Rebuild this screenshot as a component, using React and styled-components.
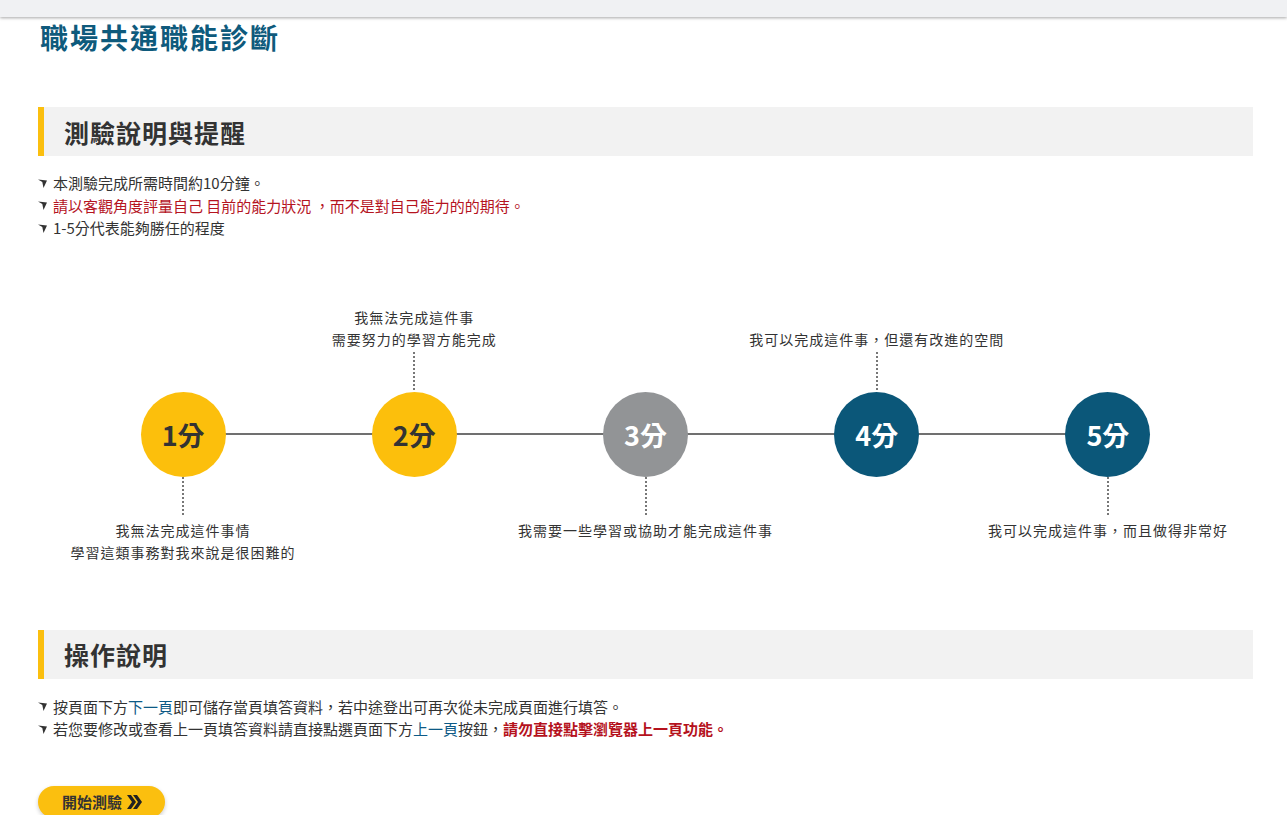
import styled, { createGlobalStyle } from 'styled-components'

const GlobalStyle = createGlobalStyle`
  body {
    margin: 0;
    background: #fff;
    font-family: "Noto Sans CJK TC", "Noto Sans", "Liberation Sans", sans-serif;
    color: #333;
  }
`

const TopBar = styled.div`
  height: 17px;
  background: #f0f1f3;
  box-shadow: 0 1px 3px rgba(0, 0, 0, 0.35);
`

const Page = styled.div`
  padding: 0 34px 0 38px;
`

const Title = styled.h1`
  margin: 1px 0 0 2px;
  font-size: 28px;
  line-height: 39px;
  font-weight: 700;
  letter-spacing: 2px;
  color: #0e5a7c;
`

const SectionHeader = styled.h2`
  margin: ${props => props.top}px 0 0;
  height: 49px;
  display: flex;
  align-items: center;
  padding-left: 20px;
  border-left: 6px solid #fbbf0f;
  background: #f2f2f2;
  font-size: 25px;
  font-weight: 700;
  letter-spacing: 1px;
  color: #333;
`

const List = styled.ul`
  list-style: none;
  margin: ${props => props.top || 16}px 0 0;
  padding: 0;
`

const Item = styled.li`
  display: flex;
  align-items: center;
  gap: 6px;
  font-size: 15px;
  line-height: 22.5px;
  color: ${props => props.red ? '#b5141f' : '#333'};
`

const Link = styled.span`
  color: #0d5a86;
`

const Warn = styled.b`
  color: #b5121d;
`

const Bullet = () => (
  <svg width="9" height="9" viewBox="0 0 9 9">
    <polygon points="0,0.5 9,1.5 5.5,9 4.3,3" fill="#333" />
  </svg>
)

const Timeline = styled.div`
  position: relative;
  width: 1156px;
  margin: 66px auto 0;
  display: grid;
  grid-template-columns: repeat(5, minmax(0, 1fr));

  &::before {
    content: "";
    position: absolute;
    left: 115px;
    right: 115px;
    top: 127px;
    height: 2px;
    background: #707070;
  }
`

const Step = styled.div`
  position: relative;
  display: flex;
  flex-direction: column;
  align-items: center;
`

const Slot = styled.div`
  height: ${props => props.h}px;
  display: flex;
  flex-direction: column;
  align-items: center;
  justify-content: ${props => props.up ? 'flex-end' : 'flex-start'};
`

const Dots = styled.div`
  width: 2px;
  height: 40px;
  margin: ${props => props.up ? '2px 0 0' : '0 0 2px'};
  background: repeating-linear-gradient(to bottom, #777 0 2px, transparent 2px 4px);
`

const Label = styled.div`
  font-size: 14px;
  line-height: 22px;
  letter-spacing: 1px;
  text-align: center;
  white-space: nowrap;
  color: #333;
`

const Circle = styled.div`
  position: relative;
  z-index: 1;
  width: 85px;
  height: 85px;
  border-radius: 50%;
  display: flex;
  align-items: center;
  justify-content: center;
  background: ${props => props.bg};
  color: ${props => props.fg};
  font-size: 27px;
  font-weight: 700;
`

const Button = styled.button`
  margin-top: 45px;
  height: 32px;
  padding: 0 22px 0 24px;
  display: flex;
  align-items: center;
  gap: 5px;
  border: none;
  border-radius: 16px;
  background: #fbbf0f;
  box-shadow: 0 2px 4px rgba(0, 0, 0, 0.2);
  font-family: inherit;
  font-size: 15px;
  font-weight: 700;
  color: #333;
  cursor: pointer;
`

const Chevrons = () => (
  <svg width="16" height="14" viewBox="0 0 16 14">
    <polygon points="0,0 4,0 9,7 4,14 0,14 5,7" fill="#222" />
    <polygon points="6,0 10,0 15,7 10,14 6,14 11,7" fill="#222" />
  </svg>
)

const steps = [
  { score: '1分', bg: '#fcbf0c', fg: '#333', down: ['我無法完成這件事情', '學習這類事務對我來說是很困難的'] },
  { score: '2分', bg: '#fcbf0c', fg: '#333', up: ['我無法完成這件事', '需要努力的學習方能完成'] },
  { score: '3分', bg: '#929496', fg: '#fff', down: ['我需要一些學習或協助才能完成這件事'] },
  { score: '4分', bg: '#0b5779', fg: '#fff', up: ['我可以完成這件事，但還有改進的空間'] },
  { score: '5分', bg: '#0b5779', fg: '#fff', down: ['我可以完成這件事，而且做得非常好'] },
]

const App = () => {
  return (
    <>
      <GlobalStyle />
      <TopBar />
      <Page>
        <Title>職場共通職能診斷</Title>

        <SectionHeader top={50}>測驗說明與提醒</SectionHeader>
        <List>
          <Item><Bullet /><span>本測驗完成所需時間約10分鐘。</span></Item>
          <Item red><Bullet /><span>請以客觀角度評量自己 目前的能力狀況 ，而不是對自己能力的的期待。</span></Item>
          <Item><Bullet /><span>1-5分代表能夠勝任的程度</span></Item>
        </List>

        <Timeline>
          {steps.map(step => (
            <Step key={step.score}>
              <Slot h={86} up>
                {step.up && (
                  <>
                    {step.up.map(line => <Label key={line}>{line}</Label>)}
                    <Dots up />
                  </>
                )}
              </Slot>
              <Circle bg={step.bg} fg={step.fg}>{step.score}</Circle>
              <Slot h={86}>
                {step.down && (
                  <>
                    <Dots />
                    {step.down.map(line => <Label key={line}>{line}</Label>)}
                  </>
                )}
              </Slot>
            </Step>
          ))}
        </Timeline>

        <SectionHeader top={67}>操作說明</SectionHeader>
        <List top={17}>
          <Item><Bullet /><span>按頁面下方<Link>下一頁</Link>即可儲存當頁填答資料，若中途登出可再次從未完成頁面進行填答。</span></Item>
          <Item><Bullet /><span>若您要修改或查看上一頁填答資料請直接點選頁面下方<Link>上一頁</Link>按鈕，<Warn>請勿直接點擊瀏覽器上一頁功能。</Warn></span></Item>
        </List>

        <Button>開始測驗<Chevrons /></Button>
      </Page>
    </>
  )
}

export default App
